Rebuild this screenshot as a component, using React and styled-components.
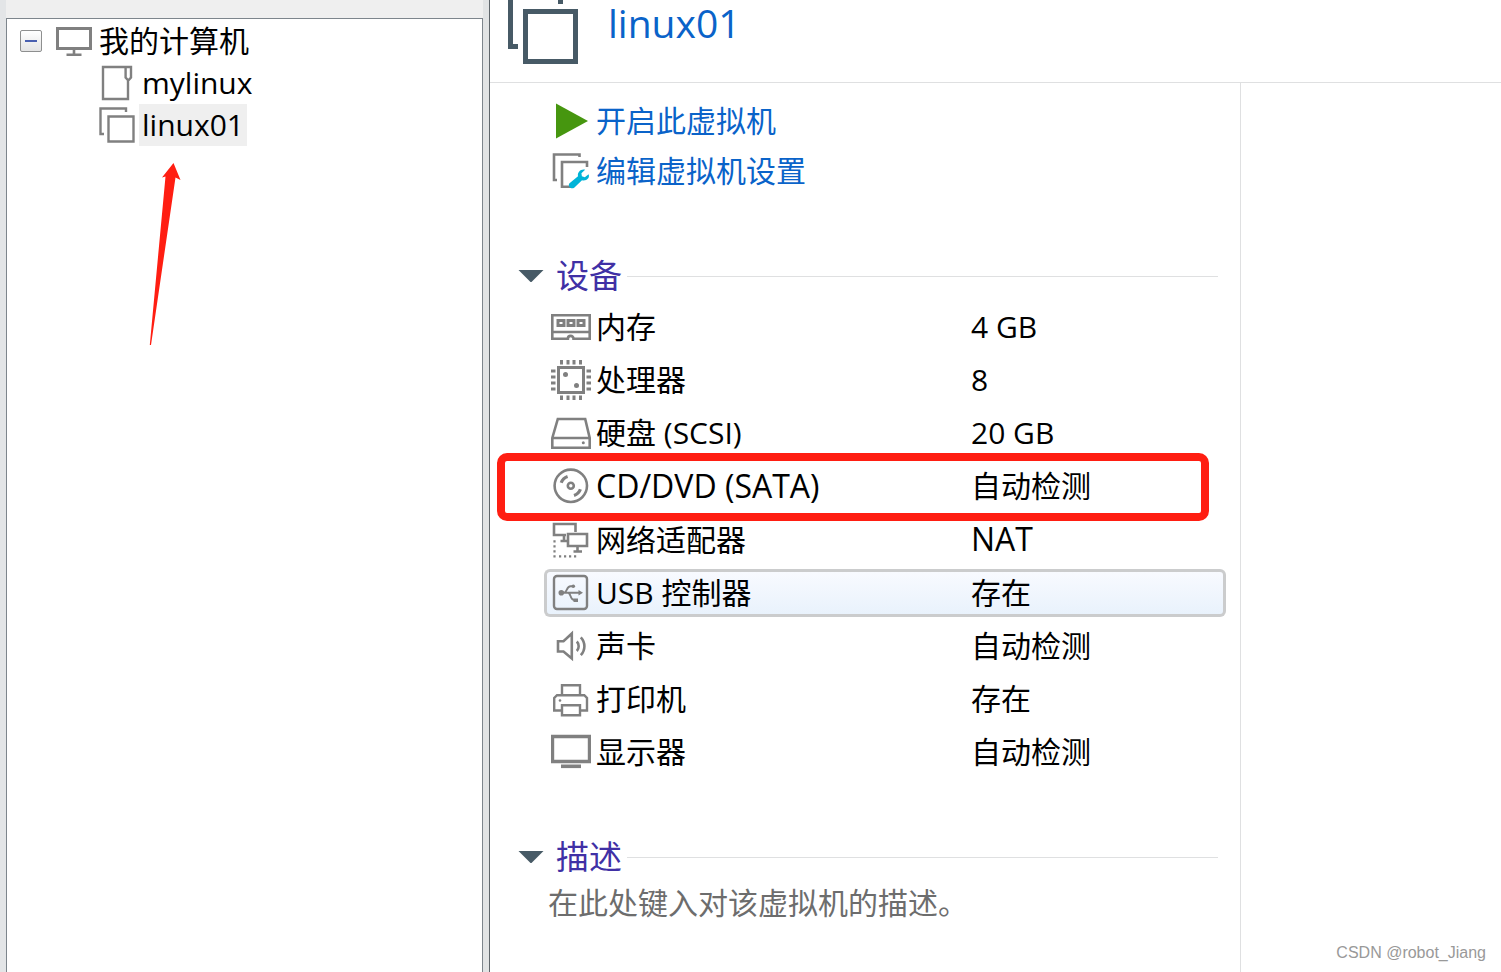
import React, { useState } from "react";
import styled, { createGlobalStyle } from "styled-components";

const GlobalStyle = createGlobalStyle`
  :root {
    --blue: #0a63c9;
    --purple: #4030a5;
    --slate: #475a66;
    --gray: #808080;
    --line: #dfe0e1;
    --red: #ff1e12;
  }

  * {
    box-sizing: border-box;
  }

  body {
    margin: 0;
    background-color: #fff;
    color: #000;
    font-family: "Open Sans", "Noto Sans CJK SC", sans-serif;
    font-size: 30px;
    line-height: 42px;
  }
`;

const Layout = styled.div`
  display: flex;
  min-height: 100vh;
`;

const Sidebar = styled.nav`
  position: relative;
  display: flex;
  flex: 0 1 489px;
  flex-direction: column;
  border-left: 6px solid #e3e5e7;
  border-right: 6px solid #e1e3e4;
`;

const SidebarTop = styled.div`
  height: 18px;
  background-color: #efefef;
`;

const TreePanel = styled.div`
  flex: 1;
  padding: 1px 0 0 13px;
  border: 1px solid #7d858c;
  border-bottom: none;
`;

const Tree = styled.ul`
  list-style: none;
  margin: 0;
  padding: 0 0 0 ${(props) => (props.$nested ? "79px" : "0")};
`;

const TreeRow = styled.div`
  display: flex;
  align-items: center;
  height: 42px;
  white-space: nowrap;
`;

const Toggle = styled.button`
  display: flex;
  align-items: center;
  justify-content: center;
  width: 22px;
  height: 22px;
  margin-right: 14px;
  padding: 0;
  border: 1px solid #8e8f8f;
  border-radius: 2px;
  background: linear-gradient(#fff, #e4e4e4);
`;

const TreeIcon = styled.svg`
  flex: none;
  width: 36px;
  height: 36px;
  fill: none;
  stroke: var(--gray);
  stroke-width: 2.4;
`;

const TreeLabel = styled.span`
  margin-left: 4px;
  padding: 0 3px;
  background-color: ${(props) => (props.$selected ? "#efefef" : "transparent")};
`;

const Arrow = styled.svg`
  position: absolute;
  top: 162px;
  left: 142px;
  width: 34px;
  height: 184px;
  fill: var(--red);
`;

const Main = styled.main`
  display: flex;
  flex: 1;
  flex-direction: column;
  min-width: 0;
  border-left: 1px solid #5f666b;
`;

const Header = styled.header`
  display: flex;
  gap: 30px;
  height: 83px;
  padding-left: 18px;
  border-bottom: 1px solid var(--line);
`;

const HeaderIcon = styled.svg`
  width: 70px;
  height: 64px;
  fill: none;
  stroke: var(--slate);
  stroke-width: 5;
`;

const Title = styled.h1`
  margin: 0;
  color: var(--blue);
  font-size: 39px;
  font-weight: 400;
  line-height: 46px;
`;

const Body = styled.div`
  display: flex;
  flex: 1;
`;

const Content = styled.div`
  flex: 1;
  min-width: 0;
  padding: 13px 14px 0 28px;
  border-right: 1px solid var(--line);
`;

const Aside = styled.aside`
  display: flex;
  flex: 0 0 260px;
  align-items: flex-end;
  justify-content: flex-end;
  padding: 0 15px 8px 0;
`;

const Watermark = styled.span`
  color: #999;
  font-family: "Liberation Sans", sans-serif;
  font-size: 16px;
  line-height: 22px;
`;

const Actions = styled.div`
  display: flex;
  flex-direction: column;
  padding: 0 0 4px 33px;
`;

const ActionLink = styled.a`
  display: flex;
  align-items: center;
  gap: 5px;
  height: 50px;
  color: var(--blue);
  text-decoration: none;
`;

const Icon = styled.svg`
  flex: none;
  width: 40px;
  height: 40px;
  fill: none;
  stroke: var(--gray);
  stroke-width: 2.6;
`;

const Section = styled.section`
  margin-top: 56px;
`;

const SectionHeading = styled.h2`
  display: flex;
  align-items: center;
  gap: 5px;
  margin: 0 8px 0 0;
  font-weight: 400;

  &::after {
    content: "";
    flex: 1;
    height: 1px;
    background-color: var(--line);
  }
`;

const SectionButton = styled.button`
  display: flex;
  align-items: center;
  gap: 12px;
  height: 40px;
  padding: 0;
  border: none;
  background: none;
  color: var(--purple);
  font: inherit;
  font-size: 33px;
  line-height: 40px;
`;

const Caret = styled.svg`
  width: 26px;
  height: 12px;
  fill: var(--slate);
`;

const DeviceTable = styled.table`
  width: calc(100% - 26px);
  margin: 2px 0 0 26px;
  border-collapse: separate;
  border-spacing: 0 5px;
  table-layout: fixed;
`;

const DeviceRow = styled.tr`
  position: relative;
  height: 48px;

  th,
  td {
    padding: 0;
    border: 0 solid ${(props) => (props.$active ? "#cbcccd" : "transparent")};
    border-width: 3px 0;
    background: ${(props) =>
      props.$active ? "linear-gradient(#f8faff, #e9f2fc)" : "none"};
    font-weight: 400;
    text-align: left;
    white-space: nowrap;
  }

  th {
    width: 427px;
    padding-left: 4px;
    border-left-width: 3px;
    border-radius: 6px 0 0 6px;
  }

  td {
    border-right-width: 3px;
    border-radius: 0 6px 6px 0;
  }
`;

const DeviceName = styled.div`
  display: flex;
  align-items: center;
  gap: 5px;
`;

const Acronym = styled.span`
  font-size: 32px;
`;

const Highlight = styled.span`
  position: absolute;
  top: -9px;
  right: 17px;
  bottom: -11px;
  left: -47px;
  border: 8px solid var(--red);
  border-radius: 10px;
  pointer-events: none;
`;

const Description = styled.textarea`
  display: block;
  width: calc(100% - 30px);
  height: 44px;
  margin: 5px 0 0 30px;
  padding: 0;
  border: none;
  outline: none;
  resize: none;
  overflow: hidden;
  background: none;
  font: inherit;

  &::placeholder {
    color: #6d6d6d;
    opacity: 1;
  }
`;

const icons = {
  memory: (
    <>
      <path d="M1.3 8.3H38.7V31.7H22.5a2.8 2.8 0 0 0-5.6 0H1.3Z" />
      <path d="M1 25H39" />
      <path d="M7 13.5h6v5H7zM17 13.5h6v5h-6zM27 13.5h6v5h-6z" strokeWidth="3" />
    </>
  ),
  cpu: (
    <>
      <path d="M7.5 7.5h25v25h-25z" strokeWidth="3" />
      <path
        d="M10.5 0v4.5M17 0v4.5M23 0v4.5M29.5 0v4.5M10.5 35.5V40M17 35.5V40M23 35.5V40M29.5 35.5V40M0 11h4.5M0 17h4.5M0 23h4.5M0 29h4.5M35.5 11H40M35.5 17H40M35.5 23H40M35.5 29H40"
        strokeWidth="3"
      />
      <circle cx="14.5" cy="14.5" r="2.5" fill="#808080" stroke="none" />
      <circle cx="25.5" cy="25.5" r="2.5" fill="#808080" stroke="none" />
    </>
  ),
  disk: (
    <>
      <path d="M1.3 25 6.8 6H34.2L38.7 25V34.7H1.3Z" />
      <path d="M1 25H39" />
      <circle cx="32.3" cy="29.7" r="1.5" fill="#808080" stroke="none" />
    </>
  ),
  disc: (
    <>
      <circle cx="19.8" cy="19.8" r="16.2" />
      <circle cx="19.8" cy="19.8" r="3" />
      <path
        d="M10.2 16.8A10.2 10.2 0 0 1 16.6 10.4M29.4 23.2A10.2 10.2 0 0 1 23 29.4"
        strokeWidth="3.2"
      />
    </>
  ),
  network: (
    <>
      <path d="M15 15H3V4H24.5V12" />
      <path d="M17 14H36V26H17Z" />
      <path d="M13 16V21M9.5 21H16M26.5 27V31M22.5 31.5H31" />
      <path
        d="M3.5 20.3V38M8 36.3H26"
        strokeWidth="2.2"
        strokeDasharray="2.2 2.8"
      />
    </>
  ),
  usb: (
    <>
      <rect x="3" y="3" width="33" height="33" rx="3" strokeWidth="2.4" />
      <path
        d="M10 19.8H29M13 19.8C16 19.8 15.5 13.2 19.5 13.2H22M17 19.8C20 19.8 19 27 23 27H25"
        strokeWidth="1.9"
      />
      <circle cx="10.3" cy="19.8" r="2.8" fill="#808080" stroke="none" />
      <circle cx="22.3" cy="13.2" r="1.8" fill="#808080" stroke="none" />
      <path
        d="M27.5 17 32 19.8 27.5 22.6ZM22.5 25.5H27V29H22.5Z"
        fill="#808080"
        stroke="none"
      />
    </>
  ),
  sound: (
    <>
      <path d="M7 15.2H12.5L20.8 7.5V32.5L12.5 25.5H7Z" />
      <path d="M25.8 15.5C28.3 18 28.3 22.5 25.8 25M29.8 11.3C34.6 16.5 34.6 24 29.8 29.2" />
    </>
  ),
  printer: (
    <>
      <path d="M11 16V6.2H29V16" strokeWidth="2.4" />
      <path
        d="M11 31.5H3.2V19L6 16.2H33.3L36 19V31.5H29"
        strokeWidth="2.4"
      />
      <path d="M11 26.2H29V36.3H11Z" strokeWidth="2.4" />
      <circle cx="9" cy="21.5" r="1.3" fill="#808080" stroke="none" />
    </>
  ),
  display: (
    <>
      <path d="M1.5 4.5H38.5V29.5H1.5Z" strokeWidth="3.4" />
      <path d="M10 34.3H30" strokeWidth="3.6" />
    </>
  ),
};

const devices = [
  { icon: "memory", name: "内存", value: "4 GB" },
  { icon: "cpu", name: "处理器", value: "8" },
  { icon: "disk", name: "硬盘 (SCSI)", value: "20 GB" },
  {
    icon: "disc",
    name: <Acronym>CD/DVD (SATA)</Acronym>,
    value: "自动检测",
    marked: true,
  },
  { icon: "network", name: "网络适配器", value: <Acronym>NAT</Acronym> },
  { icon: "usb", name: "USB 控制器", value: "存在", active: true },
  { icon: "sound", name: "声卡", value: "自动检测" },
  { icon: "printer", name: "打印机", value: "存在" },
  { icon: "display", name: "显示器", value: "自动检测" },
];

const VmTree = () => {
  const [open, setOpen] = useState(true);

  return (
    <Tree>
      <li>
        <TreeRow>
          <Toggle
            type="button"
            aria-label="我的计算机"
            aria-expanded={open}
            onClick={() => setOpen(!open)}
          >
            <svg width="12" height="12" stroke="#4a60b0" strokeWidth="2">
              <path d={open ? "M0 6H12" : "M0 6H12M6 0V12"} />
            </svg>
          </Toggle>
          <TreeIcon viewBox="0 0 36 36">
            <path d="M1.5 5.5H34.5V25.5H1.5Z" strokeWidth="3" />
            <path d="M18 27V31M10.5 31.7H25.5" strokeWidth="2.6" />
          </TreeIcon>
          <TreeLabel>我的计算机</TreeLabel>
        </TreeRow>
        {open && (
          <Tree $nested>
            <li>
              <TreeRow>
                <TreeIcon viewBox="0 0 36 36">
                  <path d="M29 15.5V34H4V2H32V12.5L29.3 15.5 26.6 12.5V2" />
                </TreeIcon>
                <TreeLabel>mylinux</TreeLabel>
              </TreeRow>
            </li>
            <li>
              <TreeRow>
                <TreeIcon viewBox="0 0 36 36">
                  <path d="M5 27H1.5V1.5H27V5" />
                  <path d="M9.5 9.5H34.5V34.5H9.5Z" />
                </TreeIcon>
                <TreeLabel $selected>linux01</TreeLabel>
              </TreeRow>
            </li>
          </Tree>
        )}
      </li>
    </Tree>
  );
};

const CollapsibleSection = ({ title, children }) => {
  const [open, setOpen] = useState(true);

  return (
    <Section>
      <SectionHeading>
        <SectionButton
          type="button"
          aria-expanded={open}
          onClick={() => setOpen(!open)}
        >
          <Caret viewBox="0 0 26 12">
            <path d={open ? "M0.5 0H25.5L13 12.5Z" : "M8 0 20 6 8 12Z"} />
          </Caret>
          {title}
        </SectionButton>
      </SectionHeading>
      {open && children}
    </Section>
  );
};

const App = () => {
  const [description, setDescription] = useState("");

  return (
    <>
      <GlobalStyle />
      <Layout>
        <Sidebar>
          <SidebarTop />
          <TreePanel>
            <VmTree />
          </TreePanel>
          <Arrow viewBox="0 0 34 184">
            <path d="M25.5 1 32.5 18 27.5 15.5 3 183H1.8L17.5 14.5 14 15.5Z" />
          </Arrow>
        </Sidebar>
        <Main>
          <Header>
            <HeaderIcon viewBox="0 0 70 64">
              <path d="M2.5 0V46.5H10M52.5 0V4M17.5 11.5H67.5V61.5H17.5Z" />
            </HeaderIcon>
            <Title>linux01</Title>
          </Header>
          <Body>
            <Content>
              <Actions>
                <ActionLink href="#power-on">
                  <Icon viewBox="0 0 40 40">
                    <path d="M5 2.5 37 20 5 37.5Z" fill="#46960f" stroke="none" />
                  </Icon>
                  开启此虚拟机
                </ActionLink>
                <ActionLink href="#settings">
                  <Icon viewBox="0 0 40 40">
                    <path d="M6 29H3V3.5H28.5V6" />
                    <path d="M20 35.8H11V11H36V16" />
                    <path
                      d="M37.6 23.2 33.8 26.3 30.9 25.2 30.4 22.2 34.1 18.7C30.5 17.4 26.2 20.5 27 25.2L18.5 32.2C16.5 34.5 19.5 39 23.2 36.7L31 29.2C35.5 30.2 39.2 27 37.6 23.2Z"
                      fill="#00b4d8"
                      stroke="none"
                    />
                  </Icon>
                  编辑虚拟机设置
                </ActionLink>
              </Actions>
              <CollapsibleSection title="设备">
                <DeviceTable>
                  <tbody>
                    {devices.map((d) => (
                      <DeviceRow key={d.icon} $active={d.active}>
                        <th scope="row">
                          <DeviceName>
                            <Icon viewBox="0 0 40 40">{icons[d.icon]}</Icon>
                            {d.name}
                          </DeviceName>
                        </th>
                        <td>
                          {d.value}
                          {d.marked && <Highlight />}
                        </td>
                      </DeviceRow>
                    ))}
                  </tbody>
                </DeviceTable>
              </CollapsibleSection>
              <CollapsibleSection title="描述">
                <Description
                  aria-label="描述"
                  placeholder="在此处键入对该虚拟机的描述。"
                  value={description}
                  onChange={(e) => setDescription(e.target.value)}
                />
              </CollapsibleSection>
            </Content>
            <Aside>
              <Watermark>CSDN @robot_Jiang</Watermark>
            </Aside>
          </Body>
        </Main>
      </Layout>
    </>
  );
};

export default App;
